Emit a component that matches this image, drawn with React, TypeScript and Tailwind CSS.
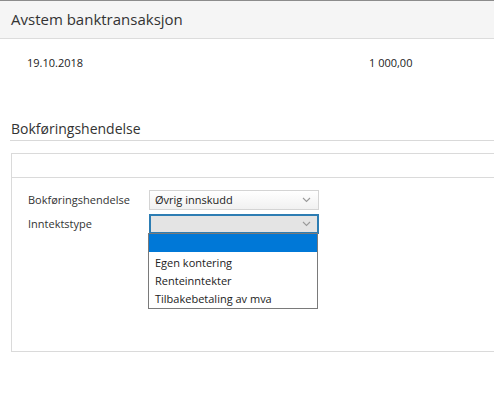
import React from 'react';

function Chevron() {
  return (
    <svg width="9" height="6" viewBox="0 0 9 6" className="text-[#9a9a9a]">
      <path d="M1 1l3.5 3.5L8 1" fill="none" stroke="currentColor" strokeWidth="1.1" />
    </svg>
  );
}

export default function App() {
  const options = ['Egen kontering', 'Renteinntekter', 'Tilbakebetaling av mva'];

  return (
    <div className="w-[494px] h-[403px] bg-white overflow-hidden font-['Open_Sans',sans-serif] text-[#333]">
      {/* Header */}
      <div className="h-[39px] border-t border-[#8c8c8c] border-b border-b-[#dcdcdc] bg-[#f5f5f5] flex items-center pl-[11px] text-[15px] text-[#333]">
        Avstem banktransaksjon
      </div>

      {/* Transaction row */}
      <div className="h-[49px] flex items-center pl-[27px] text-[11px] text-[#222]">
        <span className="w-[342px]">19.10.2018</span>
        <span>1 000,00</span>
      </div>

      {/* Section */}
      <div className="pl-[10px] mt-[29px]">
        <div className="h-[24px] border-b border-[#d9d9d9] flex items-center pl-[1px] text-[14px] text-[#333]">
          Bokføringshendelse
        </div>

        <div className="mt-[12px] ml-[1px] w-[500px] h-[199px] border border-[#dadada]">
          <div className="h-[24px] border-b border-[#dadada]" />

          <div className="pl-[16px] pt-[12px] text-[11px] flex flex-col gap-[4px]">
            <div className="flex items-center">
              <span className="w-[121px]">Bokføringshendelse</span>
              <div className="w-[170px] h-[20px] border border-[#d4d4d4] bg-gradient-to-b from-white to-[#f1f1f1] flex items-center justify-between pl-[5px] pr-[7px] text-[#222]">
                <span>Øvrig innskudd</span>
                <Chevron />
              </div>
            </div>

            <div className="flex items-center">
              <span className="w-[121px]">Inntektstype</span>
              <div className="relative">
                <div className="w-[170px] h-[20px] border-2 border-[#2d7db3] bg-[#e4e4e4] flex items-center justify-end pr-[6px]">
                  <Chevron />
                </div>
                <div className="absolute left-[-1px] top-[19px] w-[170px] border border-[#7a7a7a] bg-white text-[11px] text-[#222] z-10">
                  <div className="h-[18px] bg-[#0078d7]" />
                  <div className="pt-[2px]">
                    {options.map((o) => (
                      <div key={o} className="h-[18px] flex items-center pl-[6px]">
                        {o}
                      </div>
                    ))}
                  </div>
                </div>
              </div>
            </div>
          </div>
        </div>
      </div>
    </div>
  );
}
